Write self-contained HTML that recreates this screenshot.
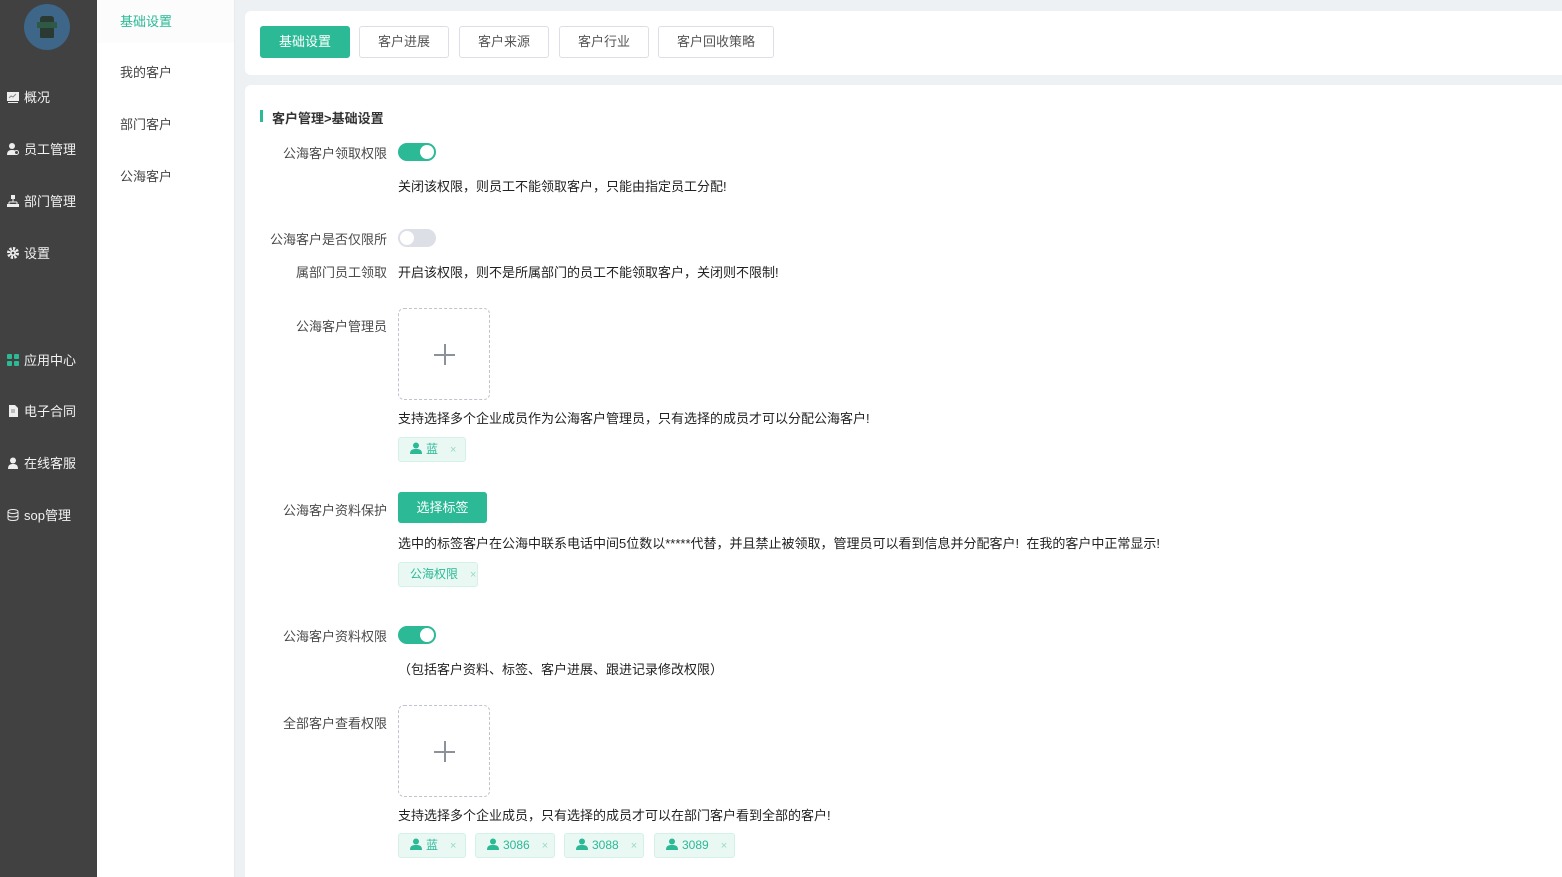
<!DOCTYPE html>
<html><head><meta charset="utf-8"><style>
*{margin:0;padding:0;box-sizing:border-box}
html,body{width:1562px;height:877px;overflow:hidden}
body{background:#eef1f4;font-family:"Liberation Sans","Noto Sans CJK SC",sans-serif;font-size:13px;color:#333;position:relative}
.abs{position:absolute}
#side{left:0;top:0;width:97px;height:877px;background:#414141}
.nav{position:absolute;left:7px;color:#f2f2f2;font-size:13px;display:flex;align-items:center;gap:5px;white-space:nowrap}
.nav svg{width:12px;height:12px}
#sub{left:97px;top:0;width:138px;height:877px;background:#fff;border-right:1px solid #e8eaee}
.si{position:absolute;left:23px;color:#444;font-size:13px}
.card{position:absolute;left:245px;right:0;background:#fff;border-radius:6px 0 0 6px}
.tab{position:absolute;top:26px;height:32px;border:1px solid #dcdfe6;border-radius:3px;color:#555;text-align:center;line-height:30px;font-size:13px;background:#fff}
.tab.on{background:#2bb996;border-color:#2bb996;color:#fff}
.lbl{position:absolute;right:1175px;color:#4a4a4a;white-space:nowrap;text-align:right}
.txt{position:absolute;left:398px;color:#222;white-space:nowrap}
.sw{position:absolute;left:398px;width:38px;height:18px;border-radius:9px;background:#2bb996}
.sw::after{content:"";position:absolute;right:2px;top:2px;width:14px;height:14px;border-radius:50%;background:#fff}
.sw.off{background:#dcdfe6}.sw.off::after{right:auto;left:2px}
.up{position:absolute;left:398px;width:92px;height:92px;border:1px dashed #bfc3cb;border-radius:6px}
.up::before{content:"";position:absolute;left:35px;top:45px;width:21px;height:1.5px;background:#8c929c}
.up::after{content:"";position:absolute;left:45px;top:35px;width:1.5px;height:21px;background:#8c929c}
.tag{position:absolute;height:25px;border:1px solid #d3f1e9;background:#eaf8f4;border-radius:3px;color:#2bb996;font-size:12px;line-height:23px;padding-left:11px;white-space:nowrap}
.tag .x{color:#9ad8c8;font-size:11px;margin-left:12px}
.tag svg{width:12px;height:12px;vertical-align:-1px;margin-right:4px}
</style></head><body>
<div id="side" class="abs">
 <div class="abs" style="left:24px;top:4px;width:46px;height:46px;border-radius:50%;background:#3d6688"><div style="position:absolute;left:16px;top:12px;width:14px;height:22px;background:#2a3a33;border-radius:3px 3px 1px 1px"></div><div style="position:absolute;left:13px;top:18px;width:20px;height:6px;background:#2e5a45"></div></div>
 <div class="nav" style="top:87px"><svg viewBox="0 0 12 12"><rect x="0" y="1" width="12" height="9" fill="#eee"/><path d="M2 7l2-2 2 1 3-3" stroke="#888" fill="none"/><rect x="1" y="11" width="10" height="1" fill="#eee"/></svg>概况</div>
 <div class="nav" style="top:139px"><svg viewBox="0 0 12 12"><circle cx="5" cy="3" r="3" fill="#eee"/><path d="M0 12c0-4 2-5 5-5s4 1 5 2v3z" fill="#eee"/><circle cx="9.5" cy="9.5" r="2" fill="#414141" stroke="#eee"/></svg>员工管理</div>
 <div class="nav" style="top:191px"><svg viewBox="0 0 12 12"><rect x="4" y="0" width="4" height="4" fill="#eee"/><path d="M6 4v3M2 7h8M2 7v2M10 7v2" stroke="#eee"/><rect x="0" y="9" width="4" height="3" fill="#eee"/><rect x="8" y="9" width="4" height="3" fill="#eee"/><rect x="4" y="9" width="4" height="3" fill="#eee"/></svg>部门管理</div>
 <div class="nav" style="top:243px"><svg viewBox="0 0 12 12"><circle cx="6" cy="6" r="4.5" fill="none" stroke="#eee" stroke-width="3" stroke-dasharray="2.2 1.3"/><circle cx="6" cy="6" r="3" fill="#eee"/><circle cx="6" cy="6" r="1.3" fill="#414141"/></svg>设置</div>
 <div class="nav" style="top:350px"><svg viewBox="0 0 12 12"><rect width="5" height="5" rx="1" fill="#2bb996"/><rect x="7" width="5" height="5" rx="1" fill="#2bb996"/><rect y="7" width="5" height="5" rx="1" fill="#2bb996"/><rect x="7" y="7" width="5" height="5" rx="1" fill="#2bb996"/></svg>应用中心</div>
 <div class="nav" style="top:401px"><svg viewBox="0 0 12 12"><path d="M2 0h6l3 3v9H2z" fill="#eee"/><path d="M4 5h4M4 7h4" stroke="#888"/></svg>电子合同</div>
 <div class="nav" style="top:453px"><svg viewBox="0 0 12 12"><circle cx="6" cy="3.5" r="3" fill="#eee"/><path d="M1 12c0-4 2-5 5-5s5 1 5 5z" fill="#eee"/></svg>在线客服</div>
 <div class="nav" style="top:505px"><svg viewBox="0 0 12 12"><ellipse cx="6" cy="2.5" rx="5" ry="2" fill="none" stroke="#eee"/><path d="M1 2.5v7c0 1.2 2.2 2 5 2s5-.8 5-2v-7M1 6c0 1.2 2.2 2 5 2s5-.8 5-2" fill="none" stroke="#eee"/></svg>sop管理</div>
</div>
<div id="sub" class="abs">
 <div class="abs" style="left:0;top:0;width:137px;height:43px;background:#fcfcfc"></div>
 <div class="si" style="top:11px;color:#2bb996">基础设置</div>
 <div class="si" style="top:62px">我的客户</div>
 <div class="si" style="top:114px">部门客户</div>
 <div class="si" style="top:166px">公海客户</div>
</div>
<div class="card" style="top:11px;height:64px"></div>
<div class="tab on" style="left:260px;width:90px">基础设置</div>
<div class="tab" style="left:359px;width:90px">客户进展</div>
<div class="tab" style="left:459px;width:90px">客户来源</div>
<div class="tab" style="left:559px;width:90px">客户行业</div>
<div class="tab" style="left:658px;width:116px">客户回收策略</div>
<div class="card" style="top:85px;height:800px"></div>
<div class="abs" style="left:260px;top:110px;width:3px;height:12px;background:#2bb996"></div>
<div class="abs" style="left:272px;top:108px;font-weight:bold;color:#333">客户管理&gt;基础设置</div>

<div class="lbl" style="top:143px">公海客户领取权限</div>
<div class="sw" style="top:143px"></div>
<div class="txt" style="top:176px">关闭该权限，则员工不能领取客户，只能由指定员工分配!</div>

<div class="lbl" style="top:229px">公海客户是否仅限所</div>
<div class="sw off" style="top:229px"></div>
<div class="lbl" style="top:262px">属部门员工领取</div>
<div class="txt" style="top:262px">开启该权限，则不是所属部门的员工不能领取客户，关闭则不限制!</div>

<div class="lbl" style="top:316px">公海客户管理员</div>
<div class="up" style="top:308px"></div>
<div class="txt" style="top:408px">支持选择多个企业成员作为公海客户管理员，只有选择的成员才可以分配公海客户!</div>
<div class="tag" style="left:398px;top:437px;width:68px"><svg viewBox="0 0 12 12"><circle cx="6" cy="3.5" r="3" fill="#2bb996"/><path d="M0 12c0-4 2-5 6-5s6 1 6 5z" fill="#2bb996"/></svg>蓝<span class="x">×</span></div>

<div class="lbl" style="top:500px">公海客户资料保护</div>
<div class="abs" style="left:398px;top:492px;width:89px;height:31px;background:#2bb996;border-radius:3px;color:#fff;text-align:center;line-height:31px">选择标签</div>
<div class="txt" style="top:533px">选中的标签客户在公海中联系电话中间5位数以*****代替，并且禁止被领取，管理员可以看到信息并分配客户!&nbsp; 在我的客户中正常显示!</div>
<div class="tag" style="left:398px;top:562px;width:80px">公海权限<span class="x">×</span></div>

<div class="lbl" style="top:626px">公海客户资料权限</div>
<div class="sw" style="top:626px"></div>
<div class="txt" style="top:659px">（包括客户资料、标签、客户进展、跟进记录修改权限）</div>

<div class="lbl" style="top:713px">全部客户查看权限</div>
<div class="up" style="top:705px"></div>
<div class="txt" style="top:805px">支持选择多个企业成员，只有选择的成员才可以在部门客户看到全部的客户!</div>
<div class="tag" style="left:398px;top:833px;width:68px"><svg viewBox="0 0 12 12"><circle cx="6" cy="3.5" r="3" fill="#2bb996"/><path d="M0 12c0-4 2-5 6-5s6 1 6 5z" fill="#2bb996"/></svg>蓝<span class="x">×</span></div>
<div class="tag" style="left:475px;top:833px;width:80px"><svg viewBox="0 0 12 12"><circle cx="6" cy="3.5" r="3" fill="#2bb996"/><path d="M0 12c0-4 2-5 6-5s6 1 6 5z" fill="#2bb996"/></svg>3086<span class="x">×</span></div>
<div class="tag" style="left:564px;top:833px;width:80px"><svg viewBox="0 0 12 12"><circle cx="6" cy="3.5" r="3" fill="#2bb996"/><path d="M0 12c0-4 2-5 6-5s6 1 6 5z" fill="#2bb996"/></svg>3088<span class="x">×</span></div>
<div class="tag" style="left:654px;top:833px;width:81px"><svg viewBox="0 0 12 12"><circle cx="6" cy="3.5" r="3" fill="#2bb996"/><path d="M0 12c0-4 2-5 6-5s6 1 6 5z" fill="#2bb996"/></svg>3089<span class="x">×</span></div>
</body></html>
